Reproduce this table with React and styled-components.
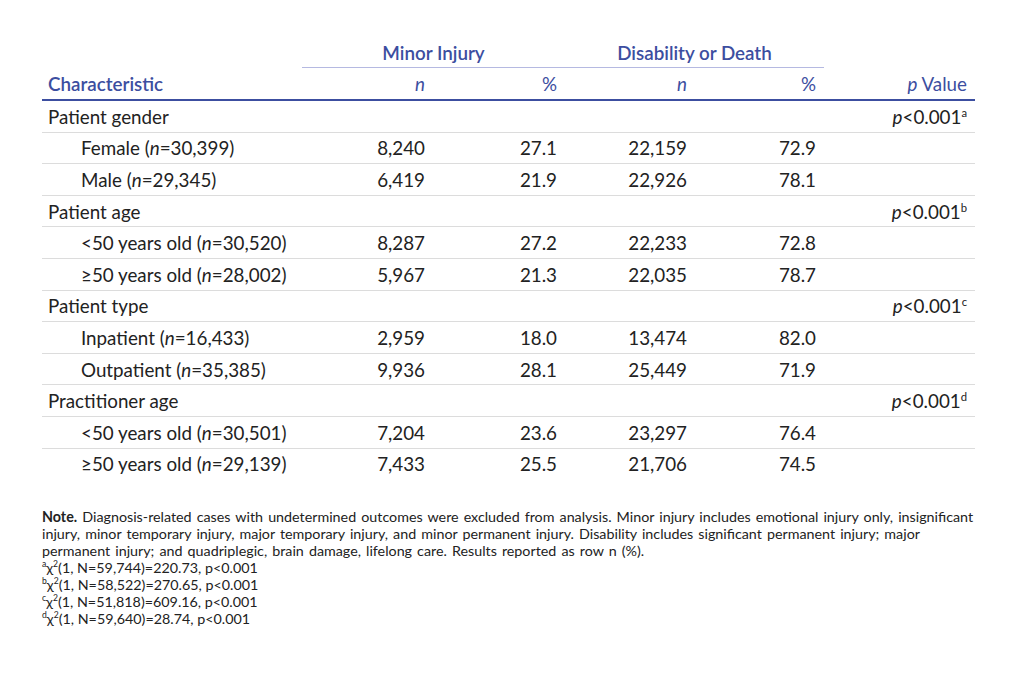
import React from 'react';
import styled, {createGlobalStyle, css} from 'styled-components';

const GlobalStyle = createGlobalStyle`
    body {
        margin: 0;
        background: #fff;
        font-family: Lato, "Open Sans", sans-serif;
        color: #222;
    }
`

const blue = '#3c4ea0';

const Page = styled.div`
    width: 1020px;
    height: 675px;
    box-sizing: border-box;
    padding: 38px 45px 0 42px;
`

const Table = styled.table`
    width: 933px;
    border-collapse: collapse;
    table-layout: fixed;
    font-size: 18.8px;
    font-weight: 400;
`

const SpanHead = styled.th`
    height: 29px;
    padding: 0;
    font-weight: 600;
    color: ${blue};
    text-align: center;
    vertical-align: middle;
    border-bottom: 1px solid #b5b9e1;
`

const Blank = styled.th`
    padding: 0;
`

const ColHead = styled.th`
    height: 31px;
    padding: 0 8px;
    font-weight: ${props => props.bold ? 600 : 400};
    color: ${blue};
    text-align: ${props => props.left ? 'left' : 'right'};
    border-bottom: 2px solid ${blue};
    ${props => props.left && css`padding-left: 6px;`}
`

const Row = styled.tr`
    & + & td {
        border-top: 1px solid #dcdcdc;
    }
`

const Cell = styled.td`
    height: 30.6px;
    padding: 0 8px;
    text-align: right;
    vertical-align: middle;
    white-space: nowrap;
`

const Label = styled(Cell)`
    text-align: left;
    padding-left: ${props => props.sub ? 39 : 6}px;
`

const Sup = styled.sup`
    font-size: 0.6em;
    vertical-align: 0.65em;
    line-height: 0;
`

const Note = styled.div`
    margin-top: 29px;
    width: 933px;
    font-size: 14.3px;
    font-weight: 400;
    line-height: 17px;
    color: #222;
`

const Foot = styled.div`
    word-spacing: ${props => props.wide ? '1.4px' : '0'};
`

const groups = [
    {
        label: 'Patient gender', sig: 'a',
        rows: [
            ['Female', '30,399', '8,240', '27.1', '22,159', '72.9'],
            ['Male', '29,345', '6,419', '21.9', '22,926', '78.1'],
        ],
    },
    {
        label: 'Patient age', sig: 'b',
        rows: [
            ['<50 years old', '30,520', '8,287', '27.2', '22,233', '72.8'],
            ['≥50 years old', '28,002', '5,967', '21.3', '22,035', '78.7'],
        ],
    },
    {
        label: 'Patient type', sig: 'c',
        rows: [
            ['Inpatient', '16,433', '2,959', '18.0', '13,474', '82.0'],
            ['Outpatient', '35,385', '9,936', '28.1', '25,449', '71.9'],
        ],
    },
    {
        label: 'Practitioner age', sig: 'd',
        rows: [
            ['<50 years old', '30,501', '7,204', '23.6', '23,297', '76.4'],
            ['≥50 years old', '29,139', '7,433', '25.5', '21,706', '74.5'],
        ],
    },
];

const tests = [
    ['a', '59,744', '220.73'],
    ['b', '58,522', '270.65'],
    ['c', '51,818', '609.16'],
    ['d', '59,640', '28.74'],
];

export default function App() {
    return (
        <Page>
            <GlobalStyle/>
            <Table>
                <colgroup>
                    <col style={{width: 260}}/>
                    <col style={{width: 131}}/>
                    <col style={{width: 132}}/>
                    <col style={{width: 130}}/>
                    <col style={{width: 129}}/>
                    <col style={{width: 151}}/>
                </colgroup>
                <thead>
                    <tr>
                        <Blank/>
                        <SpanHead colSpan={2}>Minor Injury</SpanHead>
                        <SpanHead colSpan={2}>Disability or Death</SpanHead>
                        <Blank/>
                    </tr>
                    <tr>
                        <ColHead left bold>Characteristic</ColHead>
                        <ColHead><i>n</i></ColHead>
                        <ColHead>%</ColHead>
                        <ColHead><i>n</i></ColHead>
                        <ColHead>%</ColHead>
                        <ColHead><i>p</i> Value</ColHead>
                    </tr>
                </thead>
                <tbody>
                    {groups.map(g => (
                        <React.Fragment key={g.label}>
                            <Row>
                                <Label>{g.label}</Label>
                                <Cell/><Cell/><Cell/><Cell/>
                                <Cell><i>p</i>&lt;0.001<Sup>{g.sig}</Sup></Cell>
                            </Row>
                            {g.rows.map(r => (
                                <Row key={r[0]}>
                                    <Label sub>{r[0]} (<i>n</i>={r[1]})</Label>
                                    <Cell>{r[2]}</Cell>
                                    <Cell>{r[3]}</Cell>
                                    <Cell>{r[4]}</Cell>
                                    <Cell>{r[5]}</Cell>
                                    <Cell/>
                                </Row>
                            ))}
                        </React.Fragment>
                    ))}
                </tbody>
            </Table>
            <Note>
                <Foot wide>
                    <b>Note.</b> Diagnosis-related cases with undetermined outcomes were excluded from analysis. Minor injury includes emotional injury only, insignificant injury, minor temporary injury, major temporary injury, and minor permanent injury. Disability includes significant permanent injury; major permanent injury; and quadriplegic, brain damage, lifelong care. Results reported as row n (%).
                </Foot>
                {tests.map(t => (
                    <Foot key={t[0]}>
                        <Sup>{t[0]}</Sup>χ<Sup>2</Sup>(1, N={t[1]})={t[2]}, p&lt;0.001
                    </Foot>
                ))}
            </Note>
        </Page>
    );
}
